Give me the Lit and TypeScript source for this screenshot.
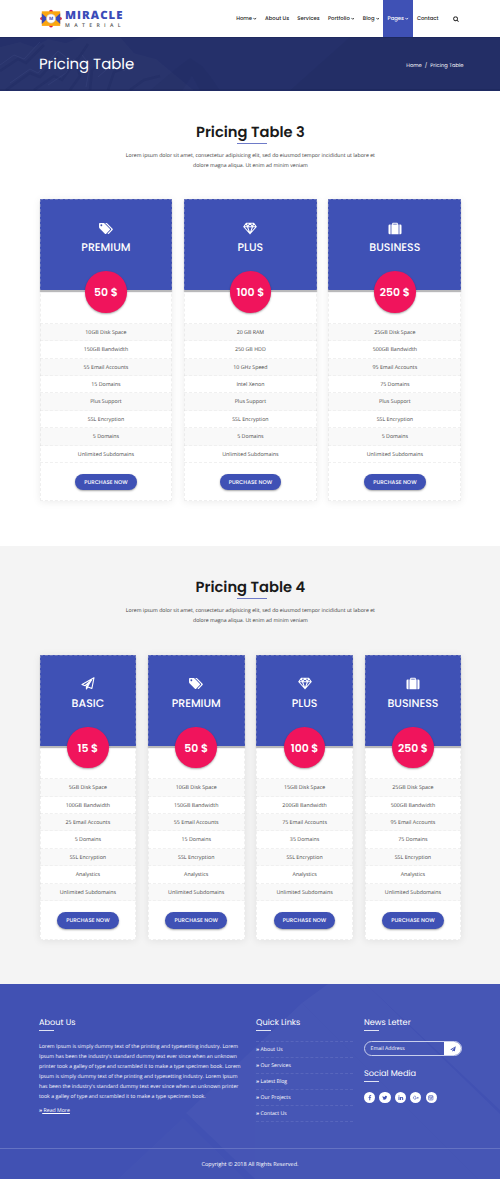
import { LitElement, html, svg, css } from "lit";
import { customElement } from "lit/decorators.js";

const icons: Record<string, unknown> = {
  search: svg`<svg class="ico" viewBox="0 0 1792 1792"><path d="M1216 832q0-185-131.5-316.5t-316.5-131.5-316.5 131.5-131.5 316.5 131.5 316.5 316.5 131.5 316.5-131.5 131.5-316.5zm512 832q0 52-38 90t-90 38q-54 0-90-38l-343-342q-179 124-399 124-143 0-273.5-55.5t-225-150-150-225-55.5-273.5 55.5-273.5 150-225 225-150 273.5-55.5 273.5 55.5 225 150 150 225 55.5 273.5q0 220-124 399l343 343q37 37 37 90z"/></svg>`,
  tags: svg`<svg class="ico" viewBox="0 0 1920 1792"><path d="M448 448q0-53-37.5-90.5t-90.5-37.5-90.5 37.5-37.5 90.5 37.5 90.5 90.5 37.5 90.5-37.5 37.5-90.5zm1067 576q0 53-37 90l-491 492q-39 37-91 37-53 0-90-37l-715-716q-38-37-64.5-101t-26.5-117v-416q0-52 38-90t90-38h416q53 0 117 26.5t102 64.5l715 714q37 39 37 91zm384 0q0 53-37 90l-491 492q-39 37-91 37-36 0-59-14t-53-45l470-470q37-37 37-90 0-52-37-91l-715-714q-38-38-102-64.5t-117-26.5h224q53 0 117 26.5t102 64.5l715 714q37 39 37 91z"/></svg>`,
  diamond: svg`<svg class="ico line" viewBox="0 0 28 26"><path d="M6.5 2.5h15L26.500 9.500 14 23.500 1.500 9.500zM1.500 9.500h25M9 9.500l5 14 5-14M6.500 2.500l2.500 7 5-7 5 7 2.500-7"/></svg>`,
  plane: svg`<svg class="ico line" viewBox="0 0 28 26"><path d="M26 1.500 2 14.800l6 2.700 13.500-11.500L10.800 19v5l3.200-4 7.800 2.800z"/><path class="solid" d="M10.800 19 21.500 6 14 20l-3.200 4z"/></svg>`,
  suitcase: svg`<svg class="ico" viewBox="0 0 28 26"><path fill-rule="evenodd" d="M6.800 5h1.600V3q0-1.500 1.500-1.500h8.200q1.500 0 1.500 1.500v2h1.600v19.500H6.800zM10.400 5h7.200V3.400h-7.200zM5.200 5v19.500H3.500Q1 24.500 1 22V7.500Q1 5 3.500 5zM22.800 5h1.700Q27 5 27 7.500V22q0 2.500-2.500 2.500h-1.700z"/></svg>`,
  send: svg`<svg class="ico" viewBox="0 0 28 28"><path d="M27 1 1 16l6.500 3L23 6 10.500 20.500V27l4-5 8 3z"/></svg>`,
  facebook: svg`<svg class="ico" viewBox="0 0 1792 1792"><path d="M1343 12v264h-157q-86 0-116 36t-30 108v189h293l-39 296h-254v759h-306v-759h-255v-296h255v-218q0-186 104-288.500t277-102.500q147 0 228 12z"/></svg>`,
  twitter: svg`<svg class="ico" viewBox="0 0 1792 1792"><path d="M1684 408q-67 98-162 167 1 14 1 42 0 130-38 259.500t-115.500 248.500-184.500 210.500-258 146-323 54.500q-271 0-496-145 35 4 78 4 225 0 401-138-105-2-188-64.500t-114-159.500q33 5 61 5 43 0 85-11-112-23-185.500-111.500t-73.500-205.500v-4q68 38 146 41-66-44-105-115t-39-154q0-88 44-163 121 149 294.500 238.500t371.500 99.500q-8-38-8-74 0-134 94.500-228.500t228.500-94.500q140 0 236 102 109-21 205-78-37 115-142 178 93-10 186-50z"/></svg>`,
  linkedin: svg`<svg class="ico" viewBox="0 0 1792 1792"><path d="M477 625v991h-330v-991h330zm21-306q1 73-50.500 122t-135.500 49h-2q-82 0-132-49t-50-122q0-74 51.500-122.500t134.500-48.500 133 48.500 51 122.500zm1166 729v568h-329v-530q0-105-40.500-164.500t-126.500-59.500q-63 0-105.500 34.500t-63.500 85.500q-11 30-11 81v553h-329q2-399 2-647t-1-296l-1-48h329v144h-2q20-32 41-56t56.500-52 87-43.500 114.500-15.500q171 0 275 113.500t104 332.500z"/></svg>`,
  google: svg`<svg class="ico line wide" viewBox="0 0 30 24"><path d="M16 6A8 8 0 1 0 18 12.500H10.500M21 12h9M25.500 7.500v9"/></svg>`,
  instagram: svg`<svg class="ico line wide" viewBox="0 0 26 26"><rect x="3" y="3" width="20" height="20" rx="3"/><circle cx="13" cy="13.500" r="4.500"/><path d="M3 9h6M17 9h6M18.500 6h1.500"/></svg>`,
};

interface Plan {
  icon: string;
  name: string;
  price: string;
  rows: string[];
}

const business = ["25GB Disk Space", "500GB Bandwidth", "95 Email Accounts", "75 Domains"];
const premium = ["10GB Disk Space", "150GB Bandwidth", "55 Email Accounts", "15 Domains"];
const tailA = ["Plus Support", "SSL Encryption", "5 Domains", "Unlimited Subdomains"];
const tailB = ["SSL Encryption", "Analystics", "Unlimited Subdomains"];

const plans3: Plan[] = [
  { icon: "tags", name: "PREMIUM", price: "50 $", rows: [...premium, ...tailA] },
  { icon: "diamond", name: "PLUS", price: "100 $", rows: ["20 GB RAM", "250 GB HDD", "10 GHz Speed", "Intel Xenon", ...tailA] },
  { icon: "suitcase", name: "BUSINESS", price: "250 $", rows: [...business, ...tailA] },
];
const plans4: Plan[] = [
  { icon: "plane", name: "BASIC", price: "15 $", rows: ["5GB Disk Space", "100GB Bandwidth", "25 Email Accounts", "5 Domains", ...tailB] },
  { icon: "tags", name: "PREMIUM", price: "50 $", rows: [...premium, ...tailB] },
  { icon: "diamond", name: "PLUS", price: "100 $", rows: ["15GB Disk Space", "200GB Bandwidth", "75 Email Accounts", "35 Domains", ...tailB] },
  { icon: "suitcase", name: "BUSINESS", price: "250 $", rows: [...business, ...tailB] },
];

const nav = [
  { label: "Home", menu: true },
  { label: "About Us" },
  { label: "Services" },
  { label: "Portfolio", menu: true },
  { label: "Blog", menu: true },
  { label: "Pages", menu: true, active: true },
  { label: "Contact" },
];

@customElement("app-root")
export class AppRoot extends LitElement {
  static styles = css`
    :host { display: block; width: 500px; height: 1179px; overflow: hidden; background: #fff; font-family: "Open Sans", sans-serif; font-size: 5.2px; line-height: 10px; color: #555; text-rendering: geometricPrecision; }
    * { box-sizing: border-box; }
    h1, h2, h3, p, ul { margin: 0; padding: 0; font-weight: 400; }
    ul { list-style: none; }
    .ico { display: block; width: 100%; height: 100%; fill: currentColor; overflow: visible; }
    .line { fill: none; stroke: currentColor; stroke-width: 2.2; stroke-linejoin: round; }
    .wide { stroke-width: 3; }
    .solid { fill: currentColor; stroke: none; }
    .h { font-family: Poppins, Inter, sans-serif; }

    header { display: flex; height: 37px; padding-left: 40px; }
    .logo { display: flex; width: 192px; padding-top: 9px; gap: 3px; }
    .mark { width: 22px; height: 19px; }
    .brand { display: flex; flex-direction: column; padding-top: 2px; }
    .b1 { font-size: 11.4px; line-height: 10px; font-weight: 800; color: #3b4bb8; letter-spacing: 1.05px; }
    .b2 { font-size: 5.2px; line-height: 6px; font-weight: 600; color: #555; letter-spacing: 4.35px; padding-top: 1px; }
    nav { display: flex; font-family: Poppins, Inter, sans-serif; font-weight: 500; font-size: 5.3px; line-height: 37px; color: #1c1c1c; }
    .item { display: flex; align-items: center; padding: 0 4.2px; white-space: nowrap; }
    .item.on { background: #3f51b5; color: #fff; }
    .chev { width: 3.6px; height: 3px; margin-left: 1px; fill: none; stroke: currentColor; stroke-width: 0.8; }
    .find { width: 6px; height: 6px; margin: 16px 0 0 10px; color: #222; }

    .banner { position: relative; display: flex; justify-content: space-between; height: 53.5px; padding: 0 36.5px 0 39px; align-items: center; background: #25306a; color: #fff; }
    .backdrop { position: absolute; inset: 0; width: 100%; height: 100%; }
    .banner h1 { position: relative; font-size: 14.9px; line-height: 20px; padding-top: 2.4px; }
    .crumb { position: relative; display: flex; gap: 3px; font-size: 5.2px; padding-top: 3.5px; }

    section { height: 455.5px; padding: 31px 38.7px 0 39.5px; }
    section.alt { height: 438px; background: #f4f4f4; }
    .title { display: flex; flex-direction: column; align-items: center; text-align: center; }
    .title h2 { font-size: 14.7px; line-height: 22px; height: 21px; font-weight: 600; color: #1a1a1a; }
    .title i { width: 30px; height: 1px; background: #6e7bc8; margin: 0 0 6px 4px; }
    .title p { width: 270px; color: #3c3c3c; }
    .cards { display: grid; gap: 11.6px; padding-top: 29.8px; }
    .three { grid-template-columns: repeat(3, 1fr); }
    .four { grid-template-columns: repeat(4, 1fr); }
    .card { display: flex; flex-direction: column; align-items: center; background: #fff; outline: 1px dashed rgba(205, 205, 205, 0.3); outline-offset: -1px; box-shadow: 0 1px 8px rgba(0, 0, 0, 0.08); padding-bottom: 11px; }
    .top { display: flex; flex-direction: column; align-items: center; width: 100%; height: 91.2px; padding-top: 22.5px; background: #3f51b5; color: #fff; box-shadow: 0 2px 1px #b9b9bb; }
    .pic { width: 14px; height: 13px; }
    .top h3 { font-size: 11px; line-height: 16px; padding-top: 4.3px; font-weight: 500; }
    .price { position: relative; width: 41.6px; height: 41.6px; margin: -19.4px 0 10px; border-radius: 50%; background: #f0145c; color: #fff; font-weight: 600; font-size: 10.9px; line-height: 43.4px; text-align: center; box-shadow: 0 1px 2px rgba(0, 0, 0, 0.35); white-space: nowrap; }
    .rows { width: 100%; border-top: 1px dashed #f0f0f0; }
    .rows li { height: 17.42px; line-height: 16.6px; font-size: 5.3px; text-align: center; border-bottom: 1px dashed #f0f0f0; color: #4a4a4a; }
    .rows li:nth-child(odd) { background: #f9f9f9; }
    .buy { width: 61.5px; height: 16.5px; margin-top: 11px; border-radius: 9px; background: #3f51b5; color: #fff; text-align: center; font: 500 5.45px/17px Poppins, Inter, sans-serif; box-shadow: 0 1px 2px rgba(0, 0, 0, 0.35); }

    footer { position: relative; height: 195px; background: #4151b3; color: #fff; }
    .cols { position: relative; display: grid; grid-template-columns: 205px 98px 98px; column-gap: 11px; padding: 32px 0 0 39px; height: 164.5px; border-bottom: 1px solid #6573c2; }
    .cols > div:nth-child(2) { margin-left: 1px; }
    .cols h3 { font-size: 8.2px; line-height: 12px; }
    .bar { width: 15px; height: 1px; background: #e0e3f4; margin-top: 2px; }
    .about { padding-top: 10px; white-space: nowrap; color: #f8f8fd; }
    .more { padding-top: 3.5px; }
    .more u { color: #fff; }
    .mk { font-weight: 700; }
    .links { margin-top: 10px; border-top: 1px dashed #5866bd; }
    .links li { height: 16px; line-height: 15px; border-bottom: 1px dashed #5866bd; }
    .mail { display: flex; width: 98px; height: 15px; margin: 10px 0 10.8px; border: 0.6px solid #c9cfec; border-radius: 8px; overflow: hidden; line-height: 13.4px; padding-left: 5.5px; justify-content: space-between; }
    .go { width: 17.5px; background: #fff; color: #3f51b5; padding: 3.5px 6px; }
    .send { width: 6px; height: 6px; }
    .social { display: flex; gap: 4.2px; padding-top: 10.5px; }
    .dot { width: 11.2px; height: 11.2px; border-radius: 50%; background: #fff; color: #3f51b5; padding: 2.8px; }
    .copy { position: relative; text-align: center; line-height: 31px; font-size: 5.55px; }
  `;

  private plans(title: string, plans: Plan[], alt: boolean) {
    return html`<section class=${alt ? "alt" : ""}>
      <div class="title">
        <h2 class="h">${title}</h2><i></i>
        <p>Lorem ipsum dolor sit amet, consectetur adipisicing elit, sed do eiusmod tempor incididunt ut labore et<br />dolore magna aliqua. Ut enim ad minim veniam</p>
      </div>
      <div class="cards ${alt ? "four" : "three"}">
        ${plans.map((p) => html`<div class="card">
          <div class="top"><span class="pic">${icons[p.icon]}</span><h3 class="h">${p.name}</h3></div>
          <div class="price h">${p.price}</div>
          <ul class="rows">${p.rows.map((r) => html`<li>${r}</li>`)}</ul>
          <div class="buy">PURCHASE NOW</div>
        </div>`)}
      </div>
    </section>`;
  }

  render() {
    return html`
      <header>
        <div class="logo">
          <svg class="mark" viewBox="0 0 22 19">
            <g fill="#d81b45"><circle cx="11" cy="2.600" r="1.900"/><circle cx="11" cy="16.600" r="1.900"/><circle cx="1.700" cy="9.600" r="1.500"/><circle cx="20.300" cy="9.600" r="1.500"/></g>
            <path fill="#fba610" d="M1.800 2.300h18.400v14.600H1.800z"/>
            <path fill="#3b4bb8" d="M1.800 4.300 7.500 9.600l-5.700 5.300zM20.200 4.300l-5.700 5.300 5.700 5.300z"/>
            <circle cx="11" cy="9.600" r="4.600" fill="#fff" stroke="#c5b9a8" stroke-width="0.600"/>
            <text x="11" y="11.200" text-anchor="middle" font-size="4.500" font-weight="700" fill="#3b4bb8">M</text>
          </svg>
          <div class="brand"><span class="b1">MIRACLE</span><span class="b2">MATERIAL</span></div>
        </div>
        <nav>${nav.map((n) => html`<span class="item ${n.active ? "on" : ""}">${n.label}${n.menu ? html`<svg class="chev" viewBox="0 0 3.6 3"><path d="M.4.900 1.800 2.300 3.200.900"/></svg>` : ""}</span>`)}</nav>
        <span class="find">${icons.search}</span>
      </header>

      <div class="banner">
        <svg class="backdrop" viewBox="0 0 500 53.5" preserveAspectRatio="none">
          <path fill="#fff" opacity="0.018" d="M0 10 20 5 34 10 48 2 66 6 80 0h40l14 16 22 6 24 20 14 11.500H0z"/>
          <path fill="none" stroke="#0d1642" stroke-width="2.500" opacity="0.100" d="M0 34 18 22 26 26 44 8M6 53 30 36l10 4 18-20M34 53l20-14 8 4 16-22M70 53l10-14-4-14 12-18M90 53l2-20 14-8M108 53l6-18 16-6M130 53l14-10 16-4"/>
          <path fill="none" stroke="#8d9ad8" stroke-width="1" opacity="0.080" d="M0 28 14 18l10 4L40 5M10 46l20-14 8 4 20-22 8 6M48 48l18-12 8-14M86 50l4-22-8-10M98 40l16-14 10 8 8-10"/>
          <path fill="#0d1642" opacity="0.070" d="M150 53.500 178 30l12-9 12 8 8 10 10 14.500h-20l-8-15-10 15z"/>
          <path fill="#0d1642" opacity="0.220" d="M0 0h500v1H0zM0 52.300h500v1.200H0z"/>
          <path fill="#0d1642" opacity="0.080" d="M350 0h150v53.500H290z"/>
        </svg>
        <h1 class="h">Pricing Table</h1>
        <div class="crumb h"><span>Home</span><span>/</span><span>Pricing Table</span></div>
      </div>

      ${this.plans("Pricing Table 3", plans3, false)}
      ${this.plans("Pricing Table 4", plans4, true)}

      <footer>
        <svg class="backdrop" viewBox="0 0 500 195">
          <g fill="#fff" opacity="0.028">
            <path d="M302 19 186 129l69 66h223zM366 0h134v126z"/>
            <path d="M328 0 302 19 478 195h22V130L366 0z"/>
          </g>
          <path fill="#fff" opacity="0.012" d="m183 134-65 61h127z"/>
        </svg>
        <div class="cols">
          <div>
            <h3 class="h">About Us</h3><div class="bar"></div>
            <p class="about">Lorem Ipsum is simply dummy text of the printing and typesetting industry. Lorem<br />Ipsum has been the industry's standard dummy text ever since when an unknown<br />printer took a galley of type and scrambled it to make a type specimen book. Lorem<br />Ipsum is simply dummy text of the printing and typesetting industry. Lorem Ipsum<br />has been the industry's standard dummy text ever since when an unknown printer<br />took a galley of type and scrambled it to make a type specimen book.</p>
            <p class="more"><span class="mk">»</span><u> Read More</u></p>
          </div>
          <div>
            <h3 class="h">Quick Links</h3><div class="bar"></div>
            <ul class="links">${["About Us", "Our Services", "Latest Blog", "Our Projects", "Contact Us"].map((l) => html`<li><span class="mk">»</span> ${l}</li>`)}</ul>
          </div>
          <div>
            <h3 class="h">News Letter</h3><div class="bar"></div>
            <div class="mail"><span>Email Address</span><div class="go"><div class="send">${icons.send}</div></div></div>
            <h3 class="h">Social Media</h3><div class="bar"></div>
            <div class="social">${["facebook", "twitter", "linkedin", "google", "instagram"].map((s) => html`<span class="dot">${icons[s]}</span>`)}</div>
          </div>
        </div>
        <div class="copy">Copyright © 2018 All Rights Reserved.</div>
      </footer>
    `;
  }
}
